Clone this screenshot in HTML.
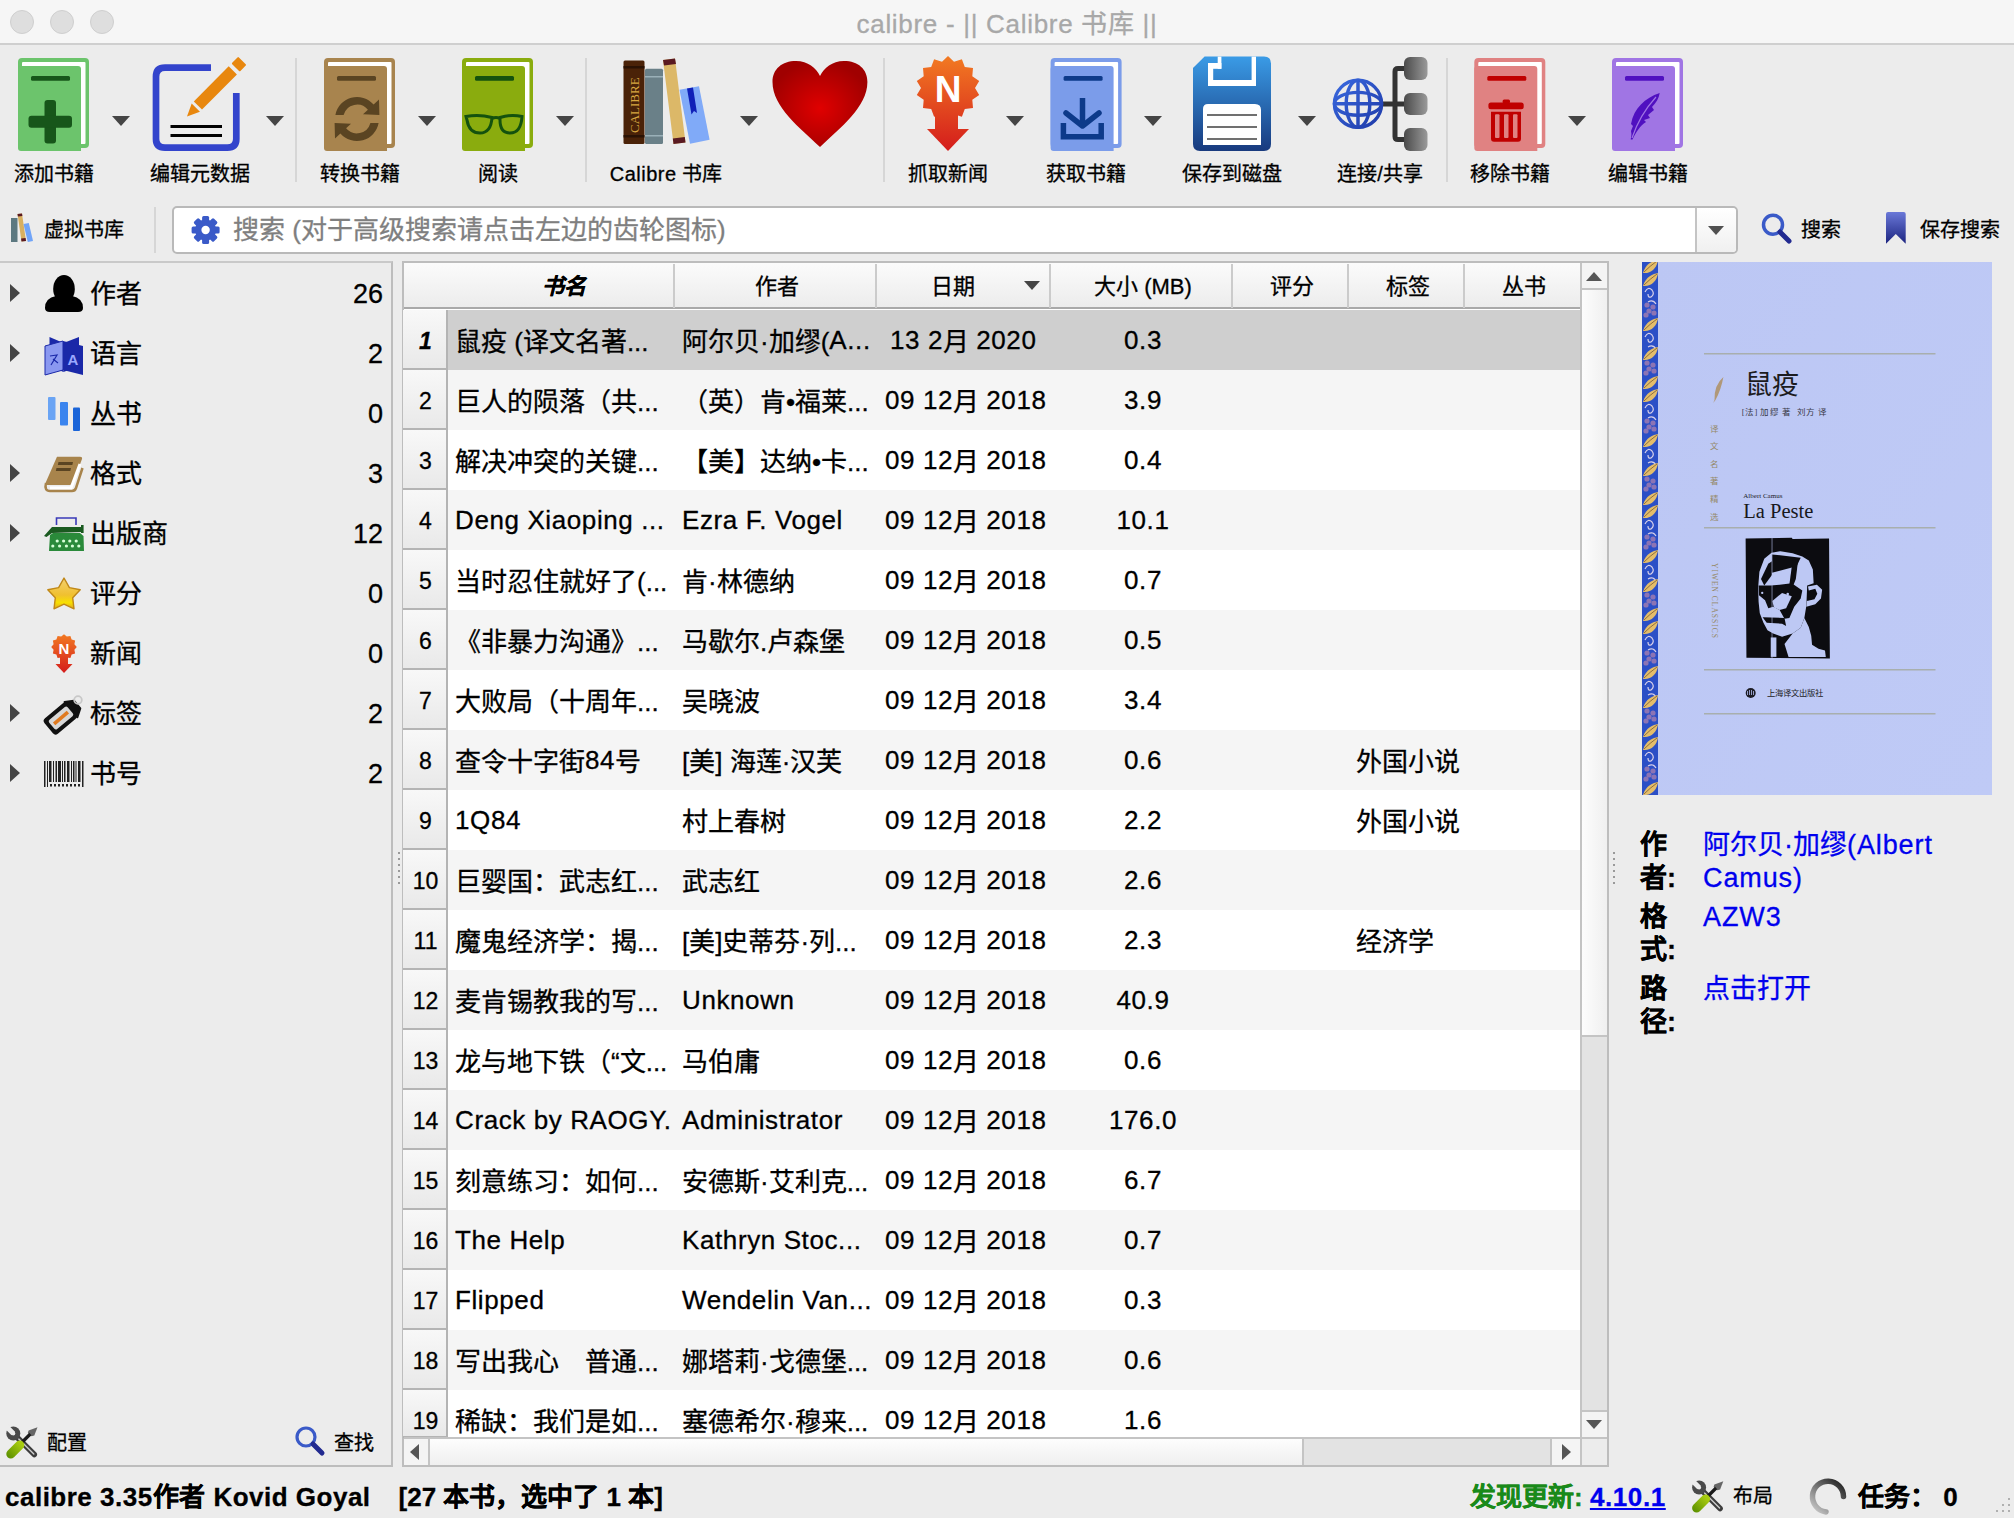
<!DOCTYPE html><html lang="zh-CN"><head><meta charset="utf-8"><style>
*{box-sizing:border-box}
body{-webkit-text-stroke:0.3px currentColor}
html,body{margin:0;padding:0;width:2014px;height:1518px;overflow:hidden;background:#ececec;font-family:"Liberation Sans", sans-serif;color:#000}
.abs{position:absolute}
.t{position:absolute;white-space:nowrap;line-height:1}
.tb{font-size:20px}
.arr{position:absolute;width:0;height:0;border-left:9px solid transparent;border-right:9px solid transparent;border-top:10px solid #454545}
.sep{position:absolute;width:2px;background:#d6d6d6}
.row{position:absolute;left:448px;width:1132px;height:60px}
.cell{position:absolute;white-space:nowrap;font-size:26px;line-height:60px;top:2px}
.rn{position:absolute;left:403px;width:45px;height:60px;background:linear-gradient(#f8f8f8,#e9e9e9);border-bottom:2px solid #b4b4b4;border-right:2px solid #b4b4b4;font-size:23px;line-height:62px;text-align:center;padding-left:2px}
.lp{position:absolute;font-size:26px;line-height:1;white-space:nowrap}
</style></head><body>
<div class="abs" style="left:0;top:0;width:2014px;height:45px;background:#f6f6f6;border-bottom:2px solid #cfcfcf"></div>
<div class="abs" style="left:10px;top:10px;width:24px;height:24px;border-radius:50%;background:#dedede;border:1px solid #cfcfcf"></div>
<div class="abs" style="left:50px;top:10px;width:24px;height:24px;border-radius:50%;background:#dedede;border:1px solid #cfcfcf"></div>
<div class="abs" style="left:90px;top:10px;width:24px;height:24px;border-radius:50%;background:#dedede;border:1px solid #cfcfcf"></div>
<div class="t" style="left:0;width:2014px;text-align:center;top:11px;font-size:26px;letter-spacing:0.7px;color:#a8a8a8">calibre - || Calibre 书库 ||</div>
<div class="t tb" style="left:-46px;width:200px;text-align:center;top:164px">添加书籍</div>
<div class="t tb" style="left:100px;width:200px;text-align:center;top:164px">编辑元数据</div>
<div class="t tb" style="left:260px;width:200px;text-align:center;top:164px">转换书籍</div>
<div class="t tb" style="left:398px;width:200px;text-align:center;top:164px">阅读</div>
<div class="t tb" style="left:566px;width:200px;text-align:center;top:164px"><span style="letter-spacing:0.5px">Calibre</span> 书库</div>
<div class="t tb" style="left:848px;width:200px;text-align:center;top:164px">抓取新闻</div>
<div class="t tb" style="left:986px;width:200px;text-align:center;top:164px">获取书籍</div>
<div class="t tb" style="left:1132px;width:200px;text-align:center;top:164px">保存到磁盘</div>
<div class="t tb" style="left:1280px;width:200px;text-align:center;top:164px">连接/共享</div>
<div class="t tb" style="left:1410px;width:200px;text-align:center;top:164px">移除书籍</div>
<div class="t tb" style="left:1548px;width:200px;text-align:center;top:164px">编辑书籍</div>
<div class="arr" style="left:112px;top:116px"></div>
<div class="arr" style="left:266px;top:116px"></div>
<div class="arr" style="left:418px;top:116px"></div>
<div class="arr" style="left:556px;top:116px"></div>
<div class="arr" style="left:740px;top:116px"></div>
<div class="arr" style="left:1006px;top:116px"></div>
<div class="arr" style="left:1144px;top:116px"></div>
<div class="arr" style="left:1298px;top:116px"></div>
<div class="arr" style="left:1568px;top:116px"></div>
<div class="sep" style="left:295px;top:58px;height:124px"></div>
<div class="sep" style="left:585px;top:58px;height:124px"></div>
<div class="sep" style="left:883px;top:58px;height:124px"></div>
<div class="sep" style="left:1446px;top:58px;height:124px"></div>
<div class="abs" style="left:11px;top:213px;width:24px;height:30px"><!--VLIB--></div>
<div class="t tb" style="left:44px;top:220px">虚拟书库</div>
<div class="sep" style="left:154px;top:207px;height:46px"></div>
<div class="abs" style="left:172px;top:206px;width:1566px;height:48px;background:#fff;border:2px solid #b9b9b9;border-radius:5px"></div>
<div class="abs" style="left:1695px;top:208px;width:2px;height:44px;background:#c4c4c4"></div>
<div class="abs" style="left:1697px;top:208px;width:39px;height:44px;background:linear-gradient(#fff,#f0f0f0);border-radius:0 4px 4px 0"></div>
<div class="arr" style="left:1708px;top:226px;border-top-color:#505050;border-left-width:8px;border-right-width:8px;border-top-width:9px"></div>
<div class="t" style="left:233px;top:217px;font-size:26px;color:#7f7f7f">搜索 (对于高级搜索请点击左边的齿轮图标)</div>
<div class="t tb" style="left:1801px;top:220px">搜索</div>
<div class="t tb" style="left:1920px;top:220px">保存搜索</div>
<svg class="abs" style="left:0;top:0" width="2014" height="262" viewBox="0 0 2014 262">
<defs>
<radialGradient id="hg" cx="0.5" cy="0.55" r="0.55"><stop offset="0" stop-color="#e00000"/><stop offset="1" stop-color="#a00000"/></radialGradient>
<linearGradient id="ng" gradientUnits="userSpaceOnUse" x1="0" y1="56" x2="0" y2="151"><stop offset="0" stop-color="#f27a22"/><stop offset="1" stop-color="#d41c1c"/></linearGradient>
<linearGradient id="fg" x1="0" y1="0" x2="0" y2="1"><stop offset="0" stop-color="#3a9be6"/><stop offset="1" stop-color="#183a7e"/></linearGradient>
<linearGradient id="gg" gradientUnits="userSpaceOnUse" x1="1334" y1="80" x2="1382" y2="128"><stop offset="0" stop-color="#3a6ae0"/><stop offset="1" stop-color="#1e3aa8"/></linearGradient>
<linearGradient id="sg" x1="0" y1="0" x2="1" y2="0"><stop offset="0" stop-color="#4a4a4a"/><stop offset="1" stop-color="#9a9a9a"/></linearGradient>
<linearGradient id="bmg" x1="0" y1="0" x2="0" y2="1"><stop offset="0" stop-color="#6a78d8"/><stop offset="1" stop-color="#1c2480"/></linearGradient>
</defs>
<g transform="translate(18,58)">
<rect x="0" y="0" width="71" height="90" rx="4" fill="#6cc46c"/>
<rect x="4" y="4" width="63.5" height="82" rx="1" fill="#fff"/>
<path d="M0,11 Q0,8 3,8 H60 Q63,8 63,11 V93 H3 Q0,93 0,90 Z" fill="#6cc46c"/>
<rect x="13" y="18" width="39" height="4.8" rx="1.5" fill="#17561a"/>
</g>
<g fill="#17561a"><rect x="44.5" y="100" width="11.5" height="43.6" rx="3"/><rect x="28.5" y="115.8" width="43.5" height="11.9" rx="3"/></g>
<path d="M211,67.7 H165 Q156,67.7 156,76.7 V139 Q156,147.7 165,147.7 H227.3 Q236.3,147.7 236.3,139 V93" fill="none" stroke="#3344cc" stroke-width="6.7"/>
<g transform="translate(187,116.5) rotate(-45.2)" fill="#e8870e"><path d="M0,0 L12.5,-5.8 V5.8 Z"/><rect x="15.5" y="-5.8" width="49.5" height="11.6"/><rect x="69" y="-5.8" width="9.5" height="11.6" rx="1"/></g>
<rect x="170.5" y="125" width="51.5" height="3" fill="#000"/><rect x="170.5" y="134" width="51.5" height="3" fill="#000"/>
<g transform="translate(324,58)">
<rect x="0" y="0" width="71" height="90" rx="4" fill="#a8844e"/>
<rect x="4" y="4" width="63.5" height="82" rx="1" fill="#fff"/>
<path d="M0,11 Q0,8 3,8 H60 Q63,8 63,11 V93 H3 Q0,93 0,90 Z" fill="#a8844e"/>
<rect x="13" y="18" width="39" height="4.8" rx="1.5" fill="#5a4422"/>
</g>
<g fill="#5a4422"><path id="rf1" d="M335.4,115 A22,22 0 0 1 373.6,104.5 L379,99.4 L379.4,115 L363,114.3 L367.9,109.7 A14,14 0 0 0 343.6,115 Z"/><path d="M335.4,115 A22,22 0 0 1 373.6,104.5 L379,99.4 L379.4,115 L363,114.3 L367.9,109.7 A14,14 0 0 0 343.6,115 Z" transform="rotate(180 357 119)"/></g>
<g transform="translate(462,58)">
<rect x="0" y="0" width="71" height="90" rx="4" fill="#8aac0e"/>
<rect x="4" y="4" width="63.5" height="82" rx="1" fill="#fff"/>
<path d="M0,11 Q0,8 3,8 H60 Q63,8 63,11 V93 H3 Q0,93 0,90 Z" fill="#8aac0e"/>
<rect x="13" y="18" width="39" height="4.8" rx="1.5" fill="#14520e"/>
</g>
<g fill="none" stroke="#14520e" stroke-width="3"><path d="M466,116.5 Q479,114 492,117.5 Q491,133 480,133 Q469,133 467,120 Z"/><path d="M500,117.5 Q511,114 522,116.5 Q521,133 510,133 Q500,133 500,120 Z"/><path d="M492,118.5 Q496,116.5 500,118.5"/></g>
<rect x="623.5" y="60.6" width="21" height="83.4" rx="1.5" fill="#4a2208"/>
<rect x="623.5" y="66" width="21" height="2.5" fill="#2a1204"/><rect x="623.5" y="135" width="21" height="2.5" fill="#2a1204"/>
<text x="0" y="0" transform="translate(639,133) rotate(-90)" font-family="Liberation Serif" font-size="13" fill="#d8a640">CALIBRE</text>
<rect x="645" y="68.8" width="18" height="75.2" rx="1.5" fill="#6a8088"/>
<rect x="645" y="76" width="18" height="1.5" fill="#9ab0b8"/><rect x="645" y="135" width="18" height="1.5" fill="#9ab0b8"/>
<path d="M663,60 L675,58.5 L685.5,142.5 L673.5,144 Z" fill="#dcb868"/>
<path d="M663,60 L675,58.5 L676,64 L664,65.5 Z M672.8,138.5 L684.8,137 L685.5,142.5 L673.5,144 Z" fill="#5a1a22"/>
<path d="M679.5,89.8 L699,86.2 L709.6,139.7 L690,143.8 Z" fill="#80aaf8"/>
<path d="M687,88.5 L693,87.5 L697,113 L694,111 L691.5,114.5 Z" fill="#1020b8"/>
<path d="M820,147 C800,128 772.5,107 772.5,82 C772.5,69 782,61 796,61 C808,61 816,68 820,76 C824,68 832,61 844,61 C858,61 867.4,69 867.4,82 C867.4,107 840,128 820,147 Z" fill="url(#hg)"/>
<g fill="url(#ng)"><polygon points="948.0,56.0 954.0,61.7 961.9,59.2 964.8,66.9 973.0,68.0 972.3,76.3 979.2,80.9 975.0,88.0 979.2,95.1 972.3,99.7 973.0,108.0 964.8,109.1 961.9,116.8 954.0,114.3 948.0,120.0 942.0,114.3 934.1,116.8 931.2,109.1 923.0,108.0 923.7,99.7 916.8,95.1 921.0,88.0 916.8,80.9 923.7,76.3 923.0,68.0 931.2,66.9 934.1,59.2 942.0,61.7"/><rect x="935" y="110" width="23" height="20"/><path d="M927,129 H969 L948,151 Z"/></g>
<text x="948" y="102" text-anchor="middle" font-family="Liberation Sans" font-weight="bold" font-size="37" fill="#fff">N</text>
<g transform="translate(1050.6,58)">
<rect x="0" y="0" width="71" height="90" rx="4" fill="#7b9cea"/>
<rect x="4" y="4" width="63.5" height="82" rx="1" fill="#fff"/>
<path d="M0,11 Q0,8 3,8 H60 Q63,8 63,11 V93 H3 Q0,93 0,90 Z" fill="#7b9cea"/>
<rect x="13" y="18" width="39" height="4.8" rx="1.5" fill="#0d3a8a"/>
</g>
<g fill="none" stroke="#0d3a8a" stroke-width="5.5"><path d="M1063.4,123 V136.8 H1101.2 V123"/><path d="M1082.5,98 V124"/><path d="M1066,113 L1082.5,126 L1099,113" stroke-linecap="round" stroke-linejoin="round"/></g>
<path d="M1200,56.6 H1264 Q1271,56.6 1271,63.6 V144 Q1271,151 1264,151 H1200 Q1193,151 1193,144 V68 L1204.6,56.6 Z" fill="url(#fg)"/>
<g fill="#fff"><rect x="1208" y="63" width="5.2" height="23"/><rect x="1208" y="80" width="48" height="6"/><rect x="1251.6" y="56.6" width="4.4" height="29.4"/><rect x="1208" y="63" width="13.4" height="5.8"/><rect x="1217.7" y="56.6" width="3.7" height="12.2"/></g>
<path d="M1208,104 H1255 Q1261,104 1261,110 V145 H1203 V109 Q1203,104 1208,104 Z" fill="#fff"/>
<g fill="#707070"><rect x="1207" y="114" width="50" height="2"/><rect x="1207" y="126" width="50" height="2"/><rect x="1207" y="138" width="50" height="2"/></g>
<g fill="none" stroke="#333" stroke-width="5"><path d="M1410,68.5 H1398 Q1395,68.5 1395,71.5 V136.5 Q1395,139.5 1398,139.5 H1410"/><path d="M1380,104 H1410"/></g>
<g fill="url(#sg)"><rect x="1404" y="57" width="23.5" height="23" rx="6"/><rect x="1404" y="93" width="23.5" height="22" rx="6"/><rect x="1404" y="128" width="23.5" height="23" rx="6"/></g>
<g fill="none" stroke="url(#gg)" stroke-width="3.4"><circle cx="1358" cy="103.8" r="23.6"/><ellipse cx="1358" cy="103.8" rx="11.8" ry="23.6"/><ellipse cx="1358" cy="103.8" rx="23.6" ry="11.4"/><path d="M1358,80.2 V127.4 M1334.4,103.8 H1381.6" stroke-width="3.5"/></g>
<g transform="translate(1474.3,58)">
<rect x="0" y="0" width="71" height="90" rx="4" fill="#e08282"/>
<rect x="4" y="4" width="63.5" height="82" rx="1" fill="#fff"/>
<path d="M0,11 Q0,8 3,8 H60 Q63,8 63,11 V93 H3 Q0,93 0,90 Z" fill="#e08282"/>
<rect x="13" y="18" width="39" height="4.8" rx="1.5" fill="#c00000"/>
</g>
<g fill="#c00000"><rect x="1488.4" y="102.4" width="35.3" height="6.8" rx="2.5"/><rect x="1502.6" y="99.4" width="7.4" height="4" rx="1.5"/><path d="M1491,111.7 H1521 V138.8 Q1521,141.8 1518,141.8 H1494 Q1491,141.8 1491,138.8 Z"/></g>
<g fill="#e08282"><rect x="1495" y="114.3" width="4.5" height="23.7" rx="1"/><rect x="1504" y="114.3" width="4.5" height="23.7" rx="1"/><rect x="1513" y="114.3" width="4.5" height="23.7" rx="1"/></g>
<g transform="translate(1612,58)">
<rect x="0" y="0" width="71" height="90" rx="4" fill="#a075e4"/>
<rect x="4" y="4" width="63.5" height="82" rx="1" fill="#fff"/>
<path d="M0,11 Q0,8 3,8 H60 Q63,8 63,11 V93 H3 Q0,93 0,90 Z" fill="#a075e4"/>
<rect x="13" y="18" width="39" height="4.8" rx="1.5" fill="#5010c0"/>
</g>
<path d="M1659.7,93 C1645,98 1634,108 1631,124 L1633,126 L1631,131 C1632,135 1631,137 1630.7,139.6 L1632.5,139.6 C1636,132 1640,126 1646,122 L1644,120 L1650,118 L1648,115 L1654,110 L1652,107 C1656,103 1659,98 1659.7,93 Z" fill="#5010c0"/>
<path d="M1656,97 C1646,108 1638,120 1632,138" stroke="#a075e4" stroke-width="1.2" fill="none"/>
<rect x="11" y="218" width="6.5" height="24" fill="#5c7880"/><path d="M17.5,214 L22,213.5 L26,241 L21.5,241.5 Z" fill="#d8b060"/><path d="M17.5,214 L22,213.5 L22.4,216 L17.9,216.5 Z M21.1,238.5 L25.6,238 L26,241 L21.5,241.5 Z" fill="#5a1a22"/><path d="M23.5,224 L28.8,223 L33,241 L27.8,242 Z" fill="#70a4f8"/>
<g transform="translate(205.6,230)" fill="#3a5ac8">
<rect x="-3.5" y="-14" width="7" height="8" rx="1.5" transform="rotate(0)"/>
<rect x="-3.5" y="-14" width="7" height="8" rx="1.5" transform="rotate(45)"/>
<rect x="-3.5" y="-14" width="7" height="8" rx="1.5" transform="rotate(90)"/>
<rect x="-3.5" y="-14" width="7" height="8" rx="1.5" transform="rotate(135)"/>
<rect x="-3.5" y="-14" width="7" height="8" rx="1.5" transform="rotate(180)"/>
<rect x="-3.5" y="-14" width="7" height="8" rx="1.5" transform="rotate(225)"/>
<rect x="-3.5" y="-14" width="7" height="8" rx="1.5" transform="rotate(270)"/>
<rect x="-3.5" y="-14" width="7" height="8" rx="1.5" transform="rotate(315)"/>
<circle r="10.5"/><circle r="4.2" fill="#fff"/></g>
<g><circle cx="1773" cy="224.8" r="9.5" fill="none" stroke="#3a5ac8" stroke-width="3.5"/><path d="M1780,232 L1789,241" stroke="#222a90" stroke-width="5" stroke-linecap="round"/></g>
<path d="M1888,212 H1903.7 Q1905.7,212 1905.7,214 V243.8 L1895.8,234 L1886,243.8 V214 Q1886,212 1888,212 Z" fill="url(#bmg)"/>
</svg>
<svg class="abs" style="left:0;top:262px" width="400" height="1210" viewBox="0 262 400 1210">
<defs><linearGradient id="stg" x1="0" y1="0" x2="0" y2="1"><stop offset="0" stop-color="#f4d070"/><stop offset="0.55" stop-color="#f0c030"/><stop offset="0.8" stop-color="#f8e000"/><stop offset="1" stop-color="#e0a820"/></linearGradient>
<linearGradient id="ng2" gradientUnits="userSpaceOnUse" x1="0" y1="634" x2="0" y2="673"><stop offset="0" stop-color="#f27a22"/><stop offset="1" stop-color="#d41c1c"/></linearGradient>
<linearGradient id="tg" gradientUnits="userSpaceOnUse" x1="2" y1="31" x2="15" y2="18"><stop offset="0" stop-color="#5c9000"/><stop offset="1" stop-color="#a8cc10"/></linearGradient></defs>
<g fill="#000"><ellipse cx="64" cy="289" rx="10.8" ry="14"/><path d="M45,308 Q45,298 56,296 L64,301 L72,296 Q83,298 83,308 Q83,312 78,312 H50 Q45,312 45,308 Z"/></g>
<path d="M49.5,337 L63.5,343 L63.5,372 L49.5,366 Z" fill="#1a28a8"/><path d="M63.5,343 L79,337 L79,366 L63.5,372 Z" fill="#1a28a8"/>
<path d="M45,346 L63,341 V370 L45,375 Z" fill="#8a98f0" stroke="#1a28a8" stroke-width="1"/><path d="M63,341 L83,346 V375 L63,370 Z" fill="#1a28a8"/>
<text x="73" y="365" text-anchor="middle" font-family="Liberation Sans" font-weight="bold" font-size="15" fill="#9aa8ff">A</text>
<path d="M50,356 L57,355 L51,365 M53,359 L58,363" stroke="#1a28a8" stroke-width="1.2" fill="none"/>
<rect x="48" y="397" width="7.5" height="23" rx="1" fill="#6aa4f4"/><rect x="60" y="402" width="8" height="23.5" rx="1" fill="#3a84ee"/><rect x="73" y="407.5" width="7" height="23.5" rx="1" fill="#1a64d8"/>
<path d="M57,456.7 H80 Q82.5,456.7 82,459 L73,483 Q72,485 70,485 H47 Q45,485 45.5,483 Z" fill="#a8844c" transform="translate(0,0)"/>
<path d="M50,488 H71 L80,464" stroke="#fff" stroke-width="3" fill="none"/>
<path d="M46,483 Q44,491 50,491 H72 Q75,491 76,488 L82.5,468" stroke="#a8844c" stroke-width="2.5" fill="none"/>
<g fill="#5a4422"><path d="M58.5,462 H73 L72.3,465 H57.8 Z"/><path d="M56.5,468 H71 L70.3,471 H55.8 Z"/></g>
<path d="M56.5,525 V518 H76 V525" stroke="#3a3ab8" stroke-width="1.6" fill="none"/>
<path d="M44,536 L52,527 H82 V532 L52,533 L46.5,537 Z" fill="#1a5a20"/><rect x="81" y="525" width="2.6" height="8" fill="#1a5a20"/>
<path d="M50,535 L53,533 H80 L83.5,536 L84,551 H49 Z" fill="#2a8a3a"/>
<circle cx="57.2" cy="541" r="1.6" fill="#d8ffd8"/>
<circle cx="63.6" cy="541" r="1.6" fill="#d8ffd8"/>
<circle cx="69.8" cy="541" r="1.6" fill="#d8ffd8"/>
<circle cx="76.2" cy="541" r="1.6" fill="#d8ffd8"/>
<circle cx="52.8" cy="546" r="1.6" fill="#d8ffd8"/>
<circle cx="59.6" cy="546" r="1.6" fill="#d8ffd8"/>
<circle cx="66.4" cy="546" r="1.6" fill="#d8ffd8"/>
<circle cx="72.4" cy="546" r="1.6" fill="#d8ffd8"/>
<circle cx="78.8" cy="546" r="1.6" fill="#d8ffd8"/>
<polygon points="64.0,578.0 69.4,587.6 80.2,589.7 72.7,597.8 74.0,608.8 64.0,604.2 54.0,608.8 55.3,597.8 47.8,589.7 58.6,587.6" fill="url(#stg)" stroke="#c08818" stroke-width="1.4" stroke-linejoin="round"/>
<g fill="url(#ng2)"><polygon points="64.0,634.2 66.8,636.6 70.4,635.9 71.6,639.4 75.1,640.6 74.4,644.2 76.8,647.0 74.4,649.8 75.1,653.4 71.6,654.6 70.4,658.1 66.8,657.4 64.0,659.8 61.2,657.4 57.6,658.1 56.4,654.6 52.9,653.4 53.6,649.8 51.2,647.0 53.6,644.2 52.9,640.6 56.4,639.4 57.6,635.9 61.2,636.6"/><rect x="60" y="655" width="8" height="9"/><path d="M55.5,664 H72.5 L64,673 Z"/></g>
<text x="64" y="653.5" text-anchor="middle" font-family="Liberation Sans" font-weight="bold" font-size="15" fill="#fff">N</text>
<g transform="translate(61,718) rotate(-40)"><rect x="-16" y="-10" width="30" height="20" rx="3.5" fill="#111"/><path d="M13,-10 L21,-5 V5 L13,10 Z" fill="#111" stroke="#111" stroke-width="2" stroke-linejoin="round"/><rect x="-12" y="-6" width="24" height="12" rx="2" fill="#d8d8d8"/><rect x="-9" y="-1.8" width="18" height="3.6" fill="#e07a20"/></g>
<circle cx="78" cy="700" r="3.8" fill="none" stroke="#c8c8c8" stroke-width="1.8"/>
<rect x="44" y="761" width="1.5" height="26" fill="#222"/>
<rect x="47" y="761" width="1" height="26" fill="#222"/>
<rect x="49" y="761" width="2.5" height="26" fill="#222"/>
<rect x="53" y="761" width="1" height="26" fill="#222"/>
<rect x="55.5" y="761" width="1.5" height="26" fill="#222"/>
<rect x="58" y="761" width="3" height="26" fill="#222"/>
<rect x="62" y="761" width="1" height="26" fill="#222"/>
<rect x="64" y="761" width="1.5" height="26" fill="#222"/>
<rect x="67" y="761" width="2.5" height="26" fill="#222"/>
<rect x="71" y="761" width="1" height="26" fill="#222"/>
<rect x="73" y="761" width="1.5" height="26" fill="#222"/>
<rect x="75.5" y="761" width="1" height="26" fill="#222"/>
<rect x="78" y="761" width="2.5" height="26" fill="#222"/>
<rect x="82" y="761" width="1.5" height="26" fill="#222"/>
<rect x="48" y="782" width="33" height="5" fill="#ececec"/>
<rect x="50" y="784" width="2" height="2.5" fill="#222"/>
<rect x="54" y="784" width="2" height="2.5" fill="#222"/>
<rect x="58" y="784" width="2" height="2.5" fill="#222"/>
<rect x="62" y="784" width="2" height="2.5" fill="#222"/>
<rect x="66" y="784" width="2" height="2.5" fill="#222"/>
<rect x="70" y="784" width="2" height="2.5" fill="#222"/>
<rect x="74" y="784" width="2" height="2.5" fill="#222"/>
<rect x="78" y="784" width="2" height="2.5" fill="#222"/>
<g transform="translate(5.8,1426)"><path d="M9,9 L28.5,28.5" stroke="#3c3c3c" stroke-width="5.5" stroke-linecap="round"/><path d="M13,13 L28,28" stroke="#cfcfcf" stroke-width="1.4" stroke-linecap="round"/><circle cx="7.5" cy="7.5" r="7" fill="#4a4a4a"/><path d="M7.5,7.5 L0,0" stroke="#ececec" stroke-width="5" stroke-linecap="butt"/><circle cx="7.5" cy="7.5" r="2" fill="#ececec"/><path d="M31.7,1.3 L28.5,9.5 L25.8,10.3 L22,6.8 L22.8,4.5 Z" fill="#666"/><path d="M24.5,8 L13,19.5" stroke="#1a1a1a" stroke-width="3.2"/><path d="M14,19 L5,28" stroke="url(#tg)" stroke-width="9" stroke-linecap="round"/></g>
<g><circle cx="306" cy="1437" r="9" fill="none" stroke="#3a5ac8" stroke-width="3.2"/><path d="M313,1444 L322,1453" stroke="#222a90" stroke-width="5" stroke-linecap="round"/></g>
</svg>
<svg class="abs" style="left:1680px;top:1468px" width="334" height="50" viewBox="1680 1468 334 50">
<defs><linearGradient id="tg2" gradientUnits="userSpaceOnUse" x1="2" y1="31" x2="15" y2="18"><stop offset="0" stop-color="#5c9000"/><stop offset="1" stop-color="#a8cc10"/></linearGradient></defs>
<g transform="translate(1691.6,1480)"><path d="M9,9 L28.5,28.5" stroke="#3c3c3c" stroke-width="5.5" stroke-linecap="round"/><path d="M13,13 L28,28" stroke="#cfcfcf" stroke-width="1.4" stroke-linecap="round"/><circle cx="7.5" cy="7.5" r="7" fill="#4a4a4a"/><path d="M7.5,7.5 L0,0" stroke="#ececec" stroke-width="5" stroke-linecap="butt"/><circle cx="7.5" cy="7.5" r="2" fill="#ececec"/><path d="M31.7,1.3 L28.5,9.5 L25.8,10.3 L22,6.8 L22.8,4.5 Z" fill="#666"/><path d="M24.5,8 L13,19.5" stroke="#1a1a1a" stroke-width="3.2"/><path d="M14,19 L5,28" stroke="url(#tg2)" stroke-width="9" stroke-linecap="round"/></g>
<defs><linearGradient id="spg" gradientUnits="userSpaceOnUse" x1="1846" y1="1480" x2="1815" y2="1515"><stop offset="0" stop-color="#111"/><stop offset="1" stop-color="#d0d0d0"/></linearGradient></defs>
<path d="M1843.5,1496.5 A15.5,15.5 0 1 0 1826,1512" fill="none" stroke="url(#spg)" stroke-width="5.5" stroke-linecap="round"/>
</svg>
<div class="abs" style="left:0;top:261px;width:393px;height:1206px;border-top:2px solid #c9c9c9;border-right:2px solid #bdbdbd;border-bottom:2px solid #bdbdbd"></div>
<div class="abs" style="left:10px;top:284px;width:0;height:0;border-top:9px solid transparent;border-bottom:9px solid transparent;border-left:10px solid #454545"></div>
<div class="lp" style="left:90px;top:281px">作者</div>
<div class="lp" style="left:283px;width:100px;text-align:right;top:281px;font-size:27px">26</div>
<div class="abs" style="left:10px;top:344px;width:0;height:0;border-top:9px solid transparent;border-bottom:9px solid transparent;border-left:10px solid #454545"></div>
<div class="lp" style="left:90px;top:341px">语言</div>
<div class="lp" style="left:283px;width:100px;text-align:right;top:341px;font-size:27px">2</div>
<div class="lp" style="left:90px;top:401px">丛书</div>
<div class="lp" style="left:283px;width:100px;text-align:right;top:401px;font-size:27px">0</div>
<div class="abs" style="left:10px;top:464px;width:0;height:0;border-top:9px solid transparent;border-bottom:9px solid transparent;border-left:10px solid #454545"></div>
<div class="lp" style="left:90px;top:461px">格式</div>
<div class="lp" style="left:283px;width:100px;text-align:right;top:461px;font-size:27px">3</div>
<div class="abs" style="left:10px;top:524px;width:0;height:0;border-top:9px solid transparent;border-bottom:9px solid transparent;border-left:10px solid #454545"></div>
<div class="lp" style="left:90px;top:521px">出版商</div>
<div class="lp" style="left:283px;width:100px;text-align:right;top:521px;font-size:27px">12</div>
<div class="lp" style="left:90px;top:581px">评分</div>
<div class="lp" style="left:283px;width:100px;text-align:right;top:581px;font-size:27px">0</div>
<div class="lp" style="left:90px;top:641px">新闻</div>
<div class="lp" style="left:283px;width:100px;text-align:right;top:641px;font-size:27px">0</div>
<div class="abs" style="left:10px;top:704px;width:0;height:0;border-top:9px solid transparent;border-bottom:9px solid transparent;border-left:10px solid #454545"></div>
<div class="lp" style="left:90px;top:701px">标签</div>
<div class="lp" style="left:283px;width:100px;text-align:right;top:701px;font-size:27px">2</div>
<div class="abs" style="left:10px;top:764px;width:0;height:0;border-top:9px solid transparent;border-bottom:9px solid transparent;border-left:10px solid #454545"></div>
<div class="lp" style="left:90px;top:761px">书号</div>
<div class="lp" style="left:283px;width:100px;text-align:right;top:761px;font-size:27px">2</div>
<div class="t tb" style="left:47px;top:1433px">配置</div>
<div class="t tb" style="left:334px;top:1433px">查找</div>
<div class="abs" style="left:398px;top:852px;width:2px;height:2px;background:#9a9a9a"></div>
<div class="abs" style="left:1613px;top:852px;width:2px;height:2px;background:#9a9a9a"></div>
<div class="abs" style="left:398px;top:858px;width:2px;height:2px;background:#9a9a9a"></div>
<div class="abs" style="left:1613px;top:858px;width:2px;height:2px;background:#9a9a9a"></div>
<div class="abs" style="left:398px;top:864px;width:2px;height:2px;background:#9a9a9a"></div>
<div class="abs" style="left:1613px;top:864px;width:2px;height:2px;background:#9a9a9a"></div>
<div class="abs" style="left:398px;top:870px;width:2px;height:2px;background:#9a9a9a"></div>
<div class="abs" style="left:1613px;top:870px;width:2px;height:2px;background:#9a9a9a"></div>
<div class="abs" style="left:398px;top:876px;width:2px;height:2px;background:#9a9a9a"></div>
<div class="abs" style="left:1613px;top:876px;width:2px;height:2px;background:#9a9a9a"></div>
<div class="abs" style="left:398px;top:882px;width:2px;height:2px;background:#9a9a9a"></div>
<div class="abs" style="left:1613px;top:882px;width:2px;height:2px;background:#9a9a9a"></div>
<div class="abs" style="left:402px;top:261px;width:1207px;height:1206px;background:#fff;border:2px solid #bdbdbd"></div>
<div class="abs" style="left:404px;top:263px;width:1176px;height:46px;background:linear-gradient(#fbfbfb,#ececec);border-bottom:2px solid #a9a9a9"></div>
<div class="abs" style="left:673px;top:264px;width:2px;height:44px;background:#cbcbcb"></div>
<div class="abs" style="left:875px;top:264px;width:2px;height:44px;background:#cbcbcb"></div>
<div class="abs" style="left:1049px;top:264px;width:2px;height:44px;background:#cbcbcb"></div>
<div class="abs" style="left:1231px;top:264px;width:2px;height:44px;background:#cbcbcb"></div>
<div class="abs" style="left:1347px;top:264px;width:2px;height:44px;background:#cbcbcb"></div>
<div class="abs" style="left:1463px;top:264px;width:2px;height:44px;background:#cbcbcb"></div>
<div class="t" style="left:451px;width:226px;text-align:center;top:276px;font-size:22px;font-weight:bold;font-style:italic;">书名</div>
<div class="t" style="left:676px;width:202px;text-align:center;top:276px;font-size:22px;">作者</div>
<div class="t" style="left:866px;width:174px;text-align:center;top:276px;font-size:22px;">日期</div>
<div class="t" style="left:1052px;width:182px;text-align:center;top:276px;font-size:22px;">大小 (MB)</div>
<div class="t" style="left:1234px;width:116px;text-align:center;top:276px;font-size:22px;">评分</div>
<div class="t" style="left:1350px;width:116px;text-align:center;top:276px;font-size:22px;">标签</div>
<div class="t" style="left:1466px;width:116px;text-align:center;top:276px;font-size:22px;">丛书</div>
<div class="arr" style="left:1024px;top:281px;border-left-width:8px;border-right-width:8px;border-top-width:9px"></div>
<div class="row" style="top:310px;height:60px;background:#cfcfcf;overflow:hidden">
<div class="cell" style="left:7px">鼠疫 (译文名著...</div>
<div class="cell" style="left:234px">阿尔贝·加缪(<span style="letter-spacing:0.6px;position:relative;top:-2px">A...</span></div>
<div class="cell" style="left:442px"><span style="letter-spacing:0.6px;position:relative;top:-2px">13 2</span>月 <span style="letter-spacing:0.6px;position:relative;top:-2px">2020</span></div>
<div class="cell" style="left:602px;width:186px;text-align:center"><span style="letter-spacing:0.6px;position:relative;top:-2px">0.3</span></div>
</div>
<div class="rn" style="top:310px;height:60px;font-weight:bold;font-style:italic;">1</div>
<div class="row" style="top:370px;height:60px;background:#f5f5f5;overflow:hidden">
<div class="cell" style="left:7px">巨人的陨落（共...</div>
<div class="cell" style="left:234px">（英）肯•福莱...</div>
<div class="cell" style="left:437px"><span style="letter-spacing:0.6px;position:relative;top:-2px">09 12</span>月 <span style="letter-spacing:0.6px;position:relative;top:-2px">2018</span></div>
<div class="cell" style="left:602px;width:186px;text-align:center"><span style="letter-spacing:0.6px;position:relative;top:-2px">3.9</span></div>
</div>
<div class="rn" style="top:370px;height:60px;">2</div>
<div class="row" style="top:430px;height:60px;background:#ffffff;overflow:hidden">
<div class="cell" style="left:7px">解决冲突的关键...</div>
<div class="cell" style="left:234px">【美】达纳•卡...</div>
<div class="cell" style="left:437px"><span style="letter-spacing:0.6px;position:relative;top:-2px">09 12</span>月 <span style="letter-spacing:0.6px;position:relative;top:-2px">2018</span></div>
<div class="cell" style="left:602px;width:186px;text-align:center"><span style="letter-spacing:0.6px;position:relative;top:-2px">0.4</span></div>
</div>
<div class="rn" style="top:430px;height:60px;">3</div>
<div class="row" style="top:490px;height:60px;background:#f5f5f5;overflow:hidden">
<div class="cell" style="left:7px"><span style="letter-spacing:0.6px;position:relative;top:-2px">Deng Xiaoping ...</span></div>
<div class="cell" style="left:234px"><span style="letter-spacing:0.6px;position:relative;top:-2px">Ezra F. Vogel</span></div>
<div class="cell" style="left:437px"><span style="letter-spacing:0.6px;position:relative;top:-2px">09 12</span>月 <span style="letter-spacing:0.6px;position:relative;top:-2px">2018</span></div>
<div class="cell" style="left:602px;width:186px;text-align:center"><span style="letter-spacing:0.6px;position:relative;top:-2px">10.1</span></div>
</div>
<div class="rn" style="top:490px;height:60px;">4</div>
<div class="row" style="top:550px;height:60px;background:#ffffff;overflow:hidden">
<div class="cell" style="left:7px">当时忍住就好了(...</div>
<div class="cell" style="left:234px">肯·林德纳</div>
<div class="cell" style="left:437px"><span style="letter-spacing:0.6px;position:relative;top:-2px">09 12</span>月 <span style="letter-spacing:0.6px;position:relative;top:-2px">2018</span></div>
<div class="cell" style="left:602px;width:186px;text-align:center"><span style="letter-spacing:0.6px;position:relative;top:-2px">0.7</span></div>
</div>
<div class="rn" style="top:550px;height:60px;">5</div>
<div class="row" style="top:610px;height:60px;background:#f5f5f5;overflow:hidden">
<div class="cell" style="left:7px">《非暴力沟通》...</div>
<div class="cell" style="left:234px">马歇尔.卢森堡</div>
<div class="cell" style="left:437px"><span style="letter-spacing:0.6px;position:relative;top:-2px">09 12</span>月 <span style="letter-spacing:0.6px;position:relative;top:-2px">2018</span></div>
<div class="cell" style="left:602px;width:186px;text-align:center"><span style="letter-spacing:0.6px;position:relative;top:-2px">0.5</span></div>
</div>
<div class="rn" style="top:610px;height:60px;">6</div>
<div class="row" style="top:670px;height:60px;background:#ffffff;overflow:hidden">
<div class="cell" style="left:7px">大败局（十周年...</div>
<div class="cell" style="left:234px">吴晓波</div>
<div class="cell" style="left:437px"><span style="letter-spacing:0.6px;position:relative;top:-2px">09 12</span>月 <span style="letter-spacing:0.6px;position:relative;top:-2px">2018</span></div>
<div class="cell" style="left:602px;width:186px;text-align:center"><span style="letter-spacing:0.6px;position:relative;top:-2px">3.4</span></div>
</div>
<div class="rn" style="top:670px;height:60px;">7</div>
<div class="row" style="top:730px;height:60px;background:#f5f5f5;overflow:hidden">
<div class="cell" style="left:7px">查令十字街<span style="letter-spacing:0.6px;position:relative;top:-2px">84</span>号</div>
<div class="cell" style="left:234px">[美] 海莲·汉芙</div>
<div class="cell" style="left:437px"><span style="letter-spacing:0.6px;position:relative;top:-2px">09 12</span>月 <span style="letter-spacing:0.6px;position:relative;top:-2px">2018</span></div>
<div class="cell" style="left:602px;width:186px;text-align:center"><span style="letter-spacing:0.6px;position:relative;top:-2px">0.6</span></div>
<div class="cell" style="left:908px">外国小说</div>
</div>
<div class="rn" style="top:730px;height:60px;">8</div>
<div class="row" style="top:790px;height:60px;background:#ffffff;overflow:hidden">
<div class="cell" style="left:7px"><span style="letter-spacing:0.6px;position:relative;top:-2px">1Q84</span></div>
<div class="cell" style="left:234px">村上春树</div>
<div class="cell" style="left:437px"><span style="letter-spacing:0.6px;position:relative;top:-2px">09 12</span>月 <span style="letter-spacing:0.6px;position:relative;top:-2px">2018</span></div>
<div class="cell" style="left:602px;width:186px;text-align:center"><span style="letter-spacing:0.6px;position:relative;top:-2px">2.2</span></div>
<div class="cell" style="left:908px">外国小说</div>
</div>
<div class="rn" style="top:790px;height:60px;">9</div>
<div class="row" style="top:850px;height:60px;background:#f5f5f5;overflow:hidden">
<div class="cell" style="left:7px">巨婴国：武志红...</div>
<div class="cell" style="left:234px">武志红</div>
<div class="cell" style="left:437px"><span style="letter-spacing:0.6px;position:relative;top:-2px">09 12</span>月 <span style="letter-spacing:0.6px;position:relative;top:-2px">2018</span></div>
<div class="cell" style="left:602px;width:186px;text-align:center"><span style="letter-spacing:0.6px;position:relative;top:-2px">2.6</span></div>
</div>
<div class="rn" style="top:850px;height:60px;">10</div>
<div class="row" style="top:910px;height:60px;background:#ffffff;overflow:hidden">
<div class="cell" style="left:7px">魔鬼经济学：揭...</div>
<div class="cell" style="left:234px">[美]史蒂芬·列...</div>
<div class="cell" style="left:437px"><span style="letter-spacing:0.6px;position:relative;top:-2px">09 12</span>月 <span style="letter-spacing:0.6px;position:relative;top:-2px">2018</span></div>
<div class="cell" style="left:602px;width:186px;text-align:center"><span style="letter-spacing:0.6px;position:relative;top:-2px">2.3</span></div>
<div class="cell" style="left:908px">经济学</div>
</div>
<div class="rn" style="top:910px;height:60px;">11</div>
<div class="row" style="top:970px;height:60px;background:#f5f5f5;overflow:hidden">
<div class="cell" style="left:7px">麦肯锡教我的写...</div>
<div class="cell" style="left:234px"><span style="letter-spacing:0.6px;position:relative;top:-2px">Unknown</span></div>
<div class="cell" style="left:437px"><span style="letter-spacing:0.6px;position:relative;top:-2px">09 12</span>月 <span style="letter-spacing:0.6px;position:relative;top:-2px">2018</span></div>
<div class="cell" style="left:602px;width:186px;text-align:center"><span style="letter-spacing:0.6px;position:relative;top:-2px">40.9</span></div>
</div>
<div class="rn" style="top:970px;height:60px;">12</div>
<div class="row" style="top:1030px;height:60px;background:#ffffff;overflow:hidden">
<div class="cell" style="left:7px">龙与地下铁（“文...</div>
<div class="cell" style="left:234px">马伯庸</div>
<div class="cell" style="left:437px"><span style="letter-spacing:0.6px;position:relative;top:-2px">09 12</span>月 <span style="letter-spacing:0.6px;position:relative;top:-2px">2018</span></div>
<div class="cell" style="left:602px;width:186px;text-align:center"><span style="letter-spacing:0.6px;position:relative;top:-2px">0.6</span></div>
</div>
<div class="rn" style="top:1030px;height:60px;">13</div>
<div class="row" style="top:1090px;height:60px;background:#f5f5f5;overflow:hidden">
<div class="cell" style="left:7px"><span style="letter-spacing:0.6px;position:relative;top:-2px">Crack by RAOGY.</span></div>
<div class="cell" style="left:234px"><span style="letter-spacing:0.6px;position:relative;top:-2px">Administrator</span></div>
<div class="cell" style="left:437px"><span style="letter-spacing:0.6px;position:relative;top:-2px">09 12</span>月 <span style="letter-spacing:0.6px;position:relative;top:-2px">2018</span></div>
<div class="cell" style="left:602px;width:186px;text-align:center"><span style="letter-spacing:0.6px;position:relative;top:-2px">176.0</span></div>
</div>
<div class="rn" style="top:1090px;height:60px;">14</div>
<div class="row" style="top:1150px;height:60px;background:#ffffff;overflow:hidden">
<div class="cell" style="left:7px">刻意练习：如何...</div>
<div class="cell" style="left:234px">安德斯·艾利克...</div>
<div class="cell" style="left:437px"><span style="letter-spacing:0.6px;position:relative;top:-2px">09 12</span>月 <span style="letter-spacing:0.6px;position:relative;top:-2px">2018</span></div>
<div class="cell" style="left:602px;width:186px;text-align:center"><span style="letter-spacing:0.6px;position:relative;top:-2px">6.7</span></div>
</div>
<div class="rn" style="top:1150px;height:60px;">15</div>
<div class="row" style="top:1210px;height:60px;background:#f5f5f5;overflow:hidden">
<div class="cell" style="left:7px"><span style="letter-spacing:0.6px;position:relative;top:-2px">The Help</span></div>
<div class="cell" style="left:234px"><span style="letter-spacing:0.6px;position:relative;top:-2px">Kathryn Stoc...</span></div>
<div class="cell" style="left:437px"><span style="letter-spacing:0.6px;position:relative;top:-2px">09 12</span>月 <span style="letter-spacing:0.6px;position:relative;top:-2px">2018</span></div>
<div class="cell" style="left:602px;width:186px;text-align:center"><span style="letter-spacing:0.6px;position:relative;top:-2px">0.7</span></div>
</div>
<div class="rn" style="top:1210px;height:60px;">16</div>
<div class="row" style="top:1270px;height:60px;background:#ffffff;overflow:hidden">
<div class="cell" style="left:7px"><span style="letter-spacing:0.6px;position:relative;top:-2px">Flipped</span></div>
<div class="cell" style="left:234px"><span style="letter-spacing:0.6px;position:relative;top:-2px">Wendelin Van...</span></div>
<div class="cell" style="left:437px"><span style="letter-spacing:0.6px;position:relative;top:-2px">09 12</span>月 <span style="letter-spacing:0.6px;position:relative;top:-2px">2018</span></div>
<div class="cell" style="left:602px;width:186px;text-align:center"><span style="letter-spacing:0.6px;position:relative;top:-2px">0.3</span></div>
</div>
<div class="rn" style="top:1270px;height:60px;">17</div>
<div class="row" style="top:1330px;height:60px;background:#f5f5f5;overflow:hidden">
<div class="cell" style="left:7px">写出我心　普通...</div>
<div class="cell" style="left:234px">娜塔莉·戈德堡...</div>
<div class="cell" style="left:437px"><span style="letter-spacing:0.6px;position:relative;top:-2px">09 12</span>月 <span style="letter-spacing:0.6px;position:relative;top:-2px">2018</span></div>
<div class="cell" style="left:602px;width:186px;text-align:center"><span style="letter-spacing:0.6px;position:relative;top:-2px">0.6</span></div>
</div>
<div class="rn" style="top:1330px;height:60px;">18</div>
<div class="row" style="top:1390px;height:48px;background:#ffffff;overflow:hidden">
<div class="cell" style="left:7px">稀缺：我们是如...</div>
<div class="cell" style="left:234px">塞德希尔·穆来...</div>
<div class="cell" style="left:437px"><span style="letter-spacing:0.6px;position:relative;top:-2px">09 12</span>月 <span style="letter-spacing:0.6px;position:relative;top:-2px">2018</span></div>
<div class="cell" style="left:602px;width:186px;text-align:center"><span style="letter-spacing:0.6px;position:relative;top:-2px">1.6</span></div>
</div>
<div class="rn" style="top:1390px;height:48px;">19</div>
<div class="abs" style="left:1580px;top:263px;width:2px;height:1175px;background:#c4c4c4"></div>
<div class="abs" style="left:1582px;top:263px;width:25px;height:27px;background:#f4f4f4;border-bottom:2px solid #c4c4c4"></div>
<div class="abs" style="left:1586px;top:272px;width:0;height:0;border-left:8px solid transparent;border-right:8px solid transparent;border-bottom:9px solid #555"></div>
<div class="abs" style="left:1582px;top:290px;width:25px;height:745px;background:linear-gradient(90deg,#fdfdfd,#efefef)"></div>
<div class="abs" style="left:1582px;top:1035px;width:25px;height:375px;background:#e3e3e3;border-top:2px solid #c4c4c4"></div>
<div class="abs" style="left:1582px;top:1410px;width:25px;height:28px;background:#f4f4f4;border-top:2px solid #c4c4c4"></div>
<div class="abs" style="left:1586px;top:1420px;width:0;height:0;border-left:8px solid transparent;border-right:8px solid transparent;border-top:9px solid #555"></div>
<div class="abs" style="left:404px;top:1437px;width:1203px;height:2px;background:#c4c4c4"></div>
<div class="abs" style="left:404px;top:1439px;width:26px;height:26px;background:#f4f4f4;border-right:2px solid #c4c4c4"></div>
<div class="abs" style="left:410px;top:1444px;width:0;height:0;border-top:8px solid transparent;border-bottom:8px solid transparent;border-right:9px solid #555"></div>
<div class="abs" style="left:430px;top:1439px;width:872px;height:26px;background:linear-gradient(#fdfdfd,#efefef)"></div>
<div class="abs" style="left:1302px;top:1439px;width:250px;height:26px;background:#e3e3e3;border-left:2px solid #c4c4c4;border-right:2px solid #c4c4c4"></div>
<div class="abs" style="left:1552px;top:1439px;width:28px;height:26px;background:#f4f4f4"></div>
<div class="abs" style="left:1562px;top:1444px;width:0;height:0;border-top:8px solid transparent;border-bottom:8px solid transparent;border-left:9px solid #555"></div>
<div class="abs" style="left:1580px;top:1439px;width:27px;height:26px;background:#ececec;border-left:2px solid #c4c4c4"></div>
<svg class="abs" style="left:1642px;top:262px" width="350" height="533" viewBox="1642 262 350 533">
<defs><linearGradient id="cbg" x1="0" y1="0" x2="1" y2="1"><stop offset="0" stop-color="#bcc7f4"/><stop offset="1" stop-color="#bfcaf6"/></linearGradient></defs>
<rect x="1642" y="262" width="350" height="533" fill="url(#cbg)"/>
<rect x="1642" y="262" width="16" height="533" fill="#2b4fc6"/>
<path d="M1643,273 C1646,263 1653,261 1658,260 C1657,268 1651,274 1643,273 Z" fill="#e4bd6a"/>
<path d="M1644,272 Q1650,266 1657,261" stroke="#7a5a30" stroke-width="0.8" fill="none"/>
<path d="M1643,286 C1646,276 1653,274 1658,273 C1657,281 1651,287 1643,286 Z" fill="#e4bd6a"/>
<path d="M1644,285 Q1650,279 1657,274" stroke="#7a5a30" stroke-width="0.8" fill="none"/>
<path d="M1645,292 q3,-6 7,-2 q3,4 -1,7 q-3,1 -3,-3 M1648,302 q5,-3 8,2" stroke="#d8d0e8" stroke-width="1.2" fill="none"/>
<circle cx="1647" cy="305" r="2.6" fill="#8c74b4"/>
<circle cx="1653" cy="307" r="2.6" fill="#8c74b4"/>
<circle cx="1649" cy="311" r="2.6" fill="#8c74b4"/>
<circle cx="1654" cy="313" r="2.6" fill="#8c74b4"/>
<circle cx="1646" cy="315" r="2.6" fill="#8c74b4"/>
<path d="M1643,331 C1646,321 1653,319 1658,318 C1657,326 1651,332 1643,331 Z" fill="#e4bd6a"/>
<path d="M1644,330 Q1650,324 1657,319" stroke="#7a5a30" stroke-width="0.8" fill="none"/>
<path d="M1645,337 q3,-6 7,-2 q3,4 -1,7 q-3,1 -3,-3 M1648,347 q5,-3 8,2" stroke="#d8d0e8" stroke-width="1.2" fill="none"/>
<path d="M1643,360 C1646,350 1653,348 1658,347 C1657,355 1651,361 1643,360 Z" fill="#e4bd6a"/>
<path d="M1644,359 Q1650,353 1657,348" stroke="#7a5a30" stroke-width="0.8" fill="none"/>
<circle cx="1647" cy="363" r="2.6" fill="#8c74b4"/>
<circle cx="1653" cy="365" r="2.6" fill="#8c74b4"/>
<circle cx="1649" cy="369" r="2.6" fill="#8c74b4"/>
<circle cx="1654" cy="371" r="2.6" fill="#8c74b4"/>
<circle cx="1646" cy="373" r="2.6" fill="#8c74b4"/>
<path d="M1643,389 C1646,379 1653,377 1658,376 C1657,384 1651,390 1643,389 Z" fill="#e4bd6a"/>
<path d="M1644,388 Q1650,382 1657,377" stroke="#7a5a30" stroke-width="0.8" fill="none"/>
<path d="M1643,402 C1646,392 1653,390 1658,389 C1657,397 1651,403 1643,402 Z" fill="#e4bd6a"/>
<path d="M1644,401 Q1650,395 1657,390" stroke="#7a5a30" stroke-width="0.8" fill="none"/>
<path d="M1645,408 q3,-6 7,-2 q3,4 -1,7 q-3,1 -3,-3 M1648,418 q5,-3 8,2" stroke="#d8d0e8" stroke-width="1.2" fill="none"/>
<circle cx="1647" cy="421" r="2.6" fill="#8c74b4"/>
<circle cx="1653" cy="423" r="2.6" fill="#8c74b4"/>
<circle cx="1649" cy="427" r="2.6" fill="#8c74b4"/>
<circle cx="1654" cy="429" r="2.6" fill="#8c74b4"/>
<circle cx="1646" cy="431" r="2.6" fill="#8c74b4"/>
<path d="M1643,447 C1646,437 1653,435 1658,434 C1657,442 1651,448 1643,447 Z" fill="#e4bd6a"/>
<path d="M1644,446 Q1650,440 1657,435" stroke="#7a5a30" stroke-width="0.8" fill="none"/>
<path d="M1645,453 q3,-6 7,-2 q3,4 -1,7 q-3,1 -3,-3 M1648,463 q5,-3 8,2" stroke="#d8d0e8" stroke-width="1.2" fill="none"/>
<path d="M1643,476 C1646,466 1653,464 1658,463 C1657,471 1651,477 1643,476 Z" fill="#e4bd6a"/>
<path d="M1644,475 Q1650,469 1657,464" stroke="#7a5a30" stroke-width="0.8" fill="none"/>
<circle cx="1647" cy="479" r="2.6" fill="#8c74b4"/>
<circle cx="1653" cy="481" r="2.6" fill="#8c74b4"/>
<circle cx="1649" cy="485" r="2.6" fill="#8c74b4"/>
<circle cx="1654" cy="487" r="2.6" fill="#8c74b4"/>
<circle cx="1646" cy="489" r="2.6" fill="#8c74b4"/>
<path d="M1643,505 C1646,495 1653,493 1658,492 C1657,500 1651,506 1643,505 Z" fill="#e4bd6a"/>
<path d="M1644,504 Q1650,498 1657,493" stroke="#7a5a30" stroke-width="0.8" fill="none"/>
<path d="M1643,518 C1646,508 1653,506 1658,505 C1657,513 1651,519 1643,518 Z" fill="#e4bd6a"/>
<path d="M1644,517 Q1650,511 1657,506" stroke="#7a5a30" stroke-width="0.8" fill="none"/>
<path d="M1645,524 q3,-6 7,-2 q3,4 -1,7 q-3,1 -3,-3 M1648,534 q5,-3 8,2" stroke="#d8d0e8" stroke-width="1.2" fill="none"/>
<circle cx="1647" cy="537" r="2.6" fill="#8c74b4"/>
<circle cx="1653" cy="539" r="2.6" fill="#8c74b4"/>
<circle cx="1649" cy="543" r="2.6" fill="#8c74b4"/>
<circle cx="1654" cy="545" r="2.6" fill="#8c74b4"/>
<circle cx="1646" cy="547" r="2.6" fill="#8c74b4"/>
<path d="M1643,563 C1646,553 1653,551 1658,550 C1657,558 1651,564 1643,563 Z" fill="#e4bd6a"/>
<path d="M1644,562 Q1650,556 1657,551" stroke="#7a5a30" stroke-width="0.8" fill="none"/>
<path d="M1645,569 q3,-6 7,-2 q3,4 -1,7 q-3,1 -3,-3 M1648,579 q5,-3 8,2" stroke="#d8d0e8" stroke-width="1.2" fill="none"/>
<path d="M1643,592 C1646,582 1653,580 1658,579 C1657,587 1651,593 1643,592 Z" fill="#e4bd6a"/>
<path d="M1644,591 Q1650,585 1657,580" stroke="#7a5a30" stroke-width="0.8" fill="none"/>
<circle cx="1647" cy="595" r="2.6" fill="#8c74b4"/>
<circle cx="1653" cy="597" r="2.6" fill="#8c74b4"/>
<circle cx="1649" cy="601" r="2.6" fill="#8c74b4"/>
<circle cx="1654" cy="603" r="2.6" fill="#8c74b4"/>
<circle cx="1646" cy="605" r="2.6" fill="#8c74b4"/>
<path d="M1643,621 C1646,611 1653,609 1658,608 C1657,616 1651,622 1643,621 Z" fill="#e4bd6a"/>
<path d="M1644,620 Q1650,614 1657,609" stroke="#7a5a30" stroke-width="0.8" fill="none"/>
<path d="M1643,634 C1646,624 1653,622 1658,621 C1657,629 1651,635 1643,634 Z" fill="#e4bd6a"/>
<path d="M1644,633 Q1650,627 1657,622" stroke="#7a5a30" stroke-width="0.8" fill="none"/>
<path d="M1645,640 q3,-6 7,-2 q3,4 -1,7 q-3,1 -3,-3 M1648,650 q5,-3 8,2" stroke="#d8d0e8" stroke-width="1.2" fill="none"/>
<circle cx="1647" cy="653" r="2.6" fill="#8c74b4"/>
<circle cx="1653" cy="655" r="2.6" fill="#8c74b4"/>
<circle cx="1649" cy="659" r="2.6" fill="#8c74b4"/>
<circle cx="1654" cy="661" r="2.6" fill="#8c74b4"/>
<circle cx="1646" cy="663" r="2.6" fill="#8c74b4"/>
<path d="M1643,679 C1646,669 1653,667 1658,666 C1657,674 1651,680 1643,679 Z" fill="#e4bd6a"/>
<path d="M1644,678 Q1650,672 1657,667" stroke="#7a5a30" stroke-width="0.8" fill="none"/>
<path d="M1645,685 q3,-6 7,-2 q3,4 -1,7 q-3,1 -3,-3 M1648,695 q5,-3 8,2" stroke="#d8d0e8" stroke-width="1.2" fill="none"/>
<path d="M1643,708 C1646,698 1653,696 1658,695 C1657,703 1651,709 1643,708 Z" fill="#e4bd6a"/>
<path d="M1644,707 Q1650,701 1657,696" stroke="#7a5a30" stroke-width="0.8" fill="none"/>
<circle cx="1647" cy="711" r="2.6" fill="#8c74b4"/>
<circle cx="1653" cy="713" r="2.6" fill="#8c74b4"/>
<circle cx="1649" cy="717" r="2.6" fill="#8c74b4"/>
<circle cx="1654" cy="719" r="2.6" fill="#8c74b4"/>
<circle cx="1646" cy="721" r="2.6" fill="#8c74b4"/>
<path d="M1643,737 C1646,727 1653,725 1658,724 C1657,732 1651,738 1643,737 Z" fill="#e4bd6a"/>
<path d="M1644,736 Q1650,730 1657,725" stroke="#7a5a30" stroke-width="0.8" fill="none"/>
<path d="M1643,750 C1646,740 1653,738 1658,737 C1657,745 1651,751 1643,750 Z" fill="#e4bd6a"/>
<path d="M1644,749 Q1650,743 1657,738" stroke="#7a5a30" stroke-width="0.8" fill="none"/>
<path d="M1645,756 q3,-6 7,-2 q3,4 -1,7 q-3,1 -3,-3 M1648,766 q5,-3 8,2" stroke="#d8d0e8" stroke-width="1.2" fill="none"/>
<circle cx="1647" cy="769" r="2.6" fill="#8c74b4"/>
<circle cx="1653" cy="771" r="2.6" fill="#8c74b4"/>
<circle cx="1649" cy="775" r="2.6" fill="#8c74b4"/>
<circle cx="1654" cy="777" r="2.6" fill="#8c74b4"/>
<circle cx="1646" cy="779" r="2.6" fill="#8c74b4"/>
<path d="M1643,795 C1646,785 1653,783 1658,782 C1657,790 1651,796 1643,795 Z" fill="#e4bd6a"/>
<path d="M1644,794 Q1650,788 1657,783" stroke="#7a5a30" stroke-width="0.8" fill="none"/>
<rect x="1704" y="353.2" width="231.5" height="1.2" fill="#a4a89c"/>
<rect x="1704" y="527.2" width="231.5" height="1.2" fill="#a4a89c"/>
<rect x="1704" y="669.2" width="231.5" height="1.2" fill="#a4a89c"/>
<rect x="1704" y="713.2" width="231.5" height="1.2" fill="#a4a89c"/>
<text x="1744.5" y="394" font-family="Liberation Serif" font-size="27" fill="#1c1c20">鼠疫</text>
<text x="1741.7" y="415" font-family="Liberation Serif" font-size="8.5" fill="#3a3a48" letter-spacing="0.5">[法] 加缪 著 &#160;刘方 译</text>
<path d="M1723.4,377 Q1714,385 1714.5,400 L1713.2,403 L1715.5,400 Q1721,390 1723.4,377 Z" fill="#b09878"/>
<text x="1714.7" y="431.5" text-anchor="middle" font-family="Liberation Serif" font-size="8.5" fill="#958868">译</text>
<text x="1714.7" y="449.1" text-anchor="middle" font-family="Liberation Serif" font-size="8.5" fill="#958868">文</text>
<text x="1714.7" y="466.7" text-anchor="middle" font-family="Liberation Serif" font-size="8.5" fill="#958868">名</text>
<text x="1714.7" y="484.3" text-anchor="middle" font-family="Liberation Serif" font-size="8.5" fill="#958868">著</text>
<text x="1714.7" y="501.9" text-anchor="middle" font-family="Liberation Serif" font-size="8.5" fill="#958868">精</text>
<text x="1714.7" y="519.5" text-anchor="middle" font-family="Liberation Serif" font-size="8.5" fill="#958868">选</text>
<text x="0" y="0" transform="translate(1711.5,563) rotate(90)" font-family="Liberation Serif" font-size="7.5" fill="#958868" letter-spacing="1">YIWEN  CLASSICS</text>
<text x="1743.3" y="497.8" font-family="Liberation Serif" font-size="7" fill="#202028">Albert Camus</text>
<text x="1743.3" y="517.5" font-family="Liberation Serif" font-size="20.5" fill="#18181c">La Peste</text>
<g transform="translate(1744,537) scale(0.081)">
<path d="M20,20 L590,10 L600,25 L1050,20 L1060,1500 L30,1490 Z" fill="#0c0c10"/>
<path d="M175,620 L190,430 L250,270 L340,195 L450,175 L600,200 L720,240 L800,290 L850,400 L860,570 L780,600 L770,850 L745,1000 L700,1120 L600,1190 L470,1230 L360,1190 L290,1150 L240,1060 L195,940 L180,800 Z" fill="#bdc8f4"/>
<path d="M790,610 L900,590 L965,650 L950,760 L880,830 L770,860 L775,790 L870,770 L905,700 L880,640 L800,660 Z" fill="#bdc8f4"/>
<path d="M745,1000 L800,1110 L830,1220 L840,1330 L920,1380 L1000,1400 L1010,1480 L550,1480 L500,1320 L600,1190 L700,1120 Z" fill="#bdc8f4"/>
<path d="M330,1240 L400,1240 L400,1480 L330,1480 Z" fill="#bdc8f4"/>
<path d="M345,215 L700,255 L650,360 L430,420 L345,440 Z" fill="#0c0c10"/>
<path d="M210,520 L300,330 L345,300 L345,470 L250,600 Z" fill="#0c0c10"/>
<path d="M180,600 L330,600 L440,590 L590,570 L720,660 L700,760 L620,860 L560,1000 L500,1010 L440,900 L360,860 L300,880 L260,780 L185,720 Z" fill="#0c0c10"/>
<path d="M600,290 L670,270 L640,520 L600,620 L560,590 Z" fill="#0c0c10"/>
<path d="M230,990 L500,1000 L520,1100 L470,1070 L280,1060 Z" fill="#0c0c10"/>
<path d="M820,660 L880,650 L890,720 L840,770 L790,780 Z" fill="#0c0c10"/>
<path d="M350,790 L470,690 L590,730 L520,880 L440,900 L370,870 Z" fill="#bdc8f4"/>
<circle cx="225" cy="690" r="14" fill="#bdc8f4"/><circle cx="540" cy="705" r="16" fill="#bdc8f4"/>
<rect x="340" y="0" width="12" height="1500" fill="#bdc8f4" opacity="0.6"/>
</g>
<circle cx="1750.7" cy="693" r="5" fill="#1c1c24"/><path d="M1747.5,695 V691 M1749.5,695 V690 M1751.5,695 V690 M1753.5,695 V691" stroke="#b4bff0" stroke-width="0.8"/>
<text x="1766.5" y="696" font-family="Liberation Serif" font-size="8.3" fill="#1c1c24">上海译文出版社</text>
</svg>
<div class="t" style="left:1640px;top:829px;font-size:27px;font-weight:bold;line-height:33px">作<br>者:</div>
<div class="t" style="left:1640px;top:901px;font-size:27px;font-weight:bold;line-height:33px">格<br>式:</div>
<div class="t" style="left:1640px;top:973px;font-size:27px;font-weight:bold;line-height:33px">路<br>径:</div>
<div class="t" style="left:1703px;top:829px;font-size:27px;color:#0000ee;line-height:33px">阿尔贝·加缪<span style="letter-spacing:0.9px">(Albert</span><br><span style="letter-spacing:0.9px">Camus)</span></div>
<div class="t" style="left:1703px;top:901px;font-size:27px;color:#0000ee;line-height:33px;letter-spacing:0.9px">AZW3</div>
<div class="t" style="left:1703px;top:973px;font-size:27px;color:#0000ee;line-height:33px">点击打开</div>
<div class="t" style="left:5px;top:1484px;font-size:26px;font-weight:bold"><span style="letter-spacing:0.5px">calibre 3.35作者 Kovid Goyal</span><span style="display:inline-block;width:28px"></span>[27 本书，选中了 1 本]</div>
<div class="t" style="left:1470px;top:1484px;font-size:26px;font-weight:bold;color:#1a8a1a">发现更新: <span style="color:#0000ee;text-decoration:underline;letter-spacing:0.6px">4.10.1</span></div>
<div class="t tb" style="left:1733px;top:1486px">布局</div>
<div class="t" style="left:1858px;top:1484px;font-size:26px;font-weight:bold">任务： 0</div>
<div class="abs" style="left:2008px;top:1504px;width:2px;height:2px;background:#b0b0b0"></div>
<div class="abs" style="left:2008px;top:1510px;width:2px;height:2px;background:#b0b0b0"></div>
<div class="abs" style="left:2002px;top:1510px;width:2px;height:2px;background:#b0b0b0"></div>
<div class="abs" style="left:1996px;top:1510px;width:2px;height:2px;background:#b0b0b0"></div>
<div class="abs" style="left:2002px;top:1504px;width:2px;height:2px;background:#b0b0b0"></div>
<div class="abs" style="left:2008px;top:1498px;width:2px;height:2px;background:#b0b0b0"></div>
</body></html>
